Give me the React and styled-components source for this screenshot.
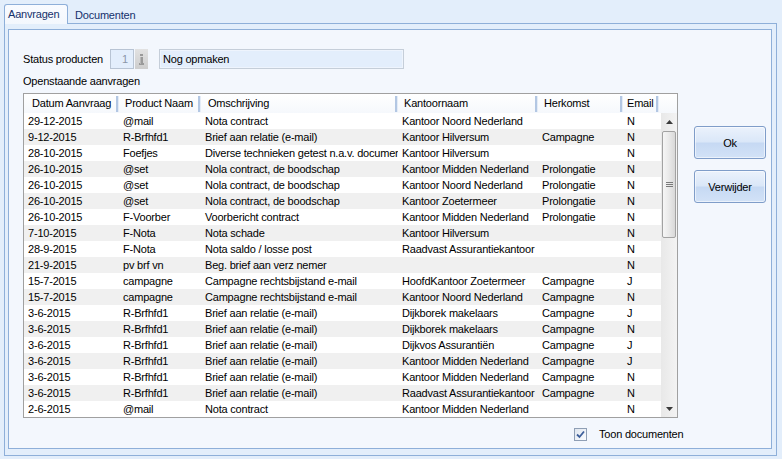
import React from "react";
import styled, { createGlobalStyle } from "styled-components";

const GlobalStyle = createGlobalStyle`
  html, body {
    margin: 0;
    padding: 0;
  }
  body {
    font-family: "Liberation Sans", Arial, sans-serif;
    font-size: 11px;
    letter-spacing: -0.2px;
    color: #000;
    background: #e3eefb;
  }
`;

const COLUMNS = [
  { title: "Datum Aanvraag", width: 95, pad: 8 },
  { title: "Product Naam", width: 82, pad: 6 },
  { title: "Omschrijving", width: 197, pad: 7 },
  { title: "Kantoornaam", width: 140, pad: 6 },
  { title: "Herkomst", width: 85, pad: 6 },
  { title: "Email", width: 36, pad: 4 },
];

const ROWS = [
  ["29-12-2015", "@mail", "Nota contract", "Kantoor Noord Nederland", "", "N"],
  ["9-12-2015", "R-Brfhfd1", "Brief aan relatie (e-mail)", "Kantoor Hilversum", "Campagne", "N"],
  ["28-10-2015", "Foefjes", "Diverse technieken getest n.a.v. documentatie", "Kantoor Hilversum", "", "N"],
  ["26-10-2015", "@set", "Nola contract, de boodschap", "Kantoor Midden Nederland", "Prolongatie", "N"],
  ["26-10-2015", "@set", "Nola contract, de boodschap", "Kantoor Noord Nederland", "Prolongatie", "N"],
  ["26-10-2015", "@set", "Nola contract, de boodschap", "Kantoor Zoetermeer", "Prolongatie", "N"],
  ["26-10-2015", "F-Voorber", "Voorbericht contract", "Kantoor Midden Nederland", "Prolongatie", "N"],
  ["7-10-2015", "F-Nota", "Nota schade", "Kantoor Hilversum", "", "N"],
  ["28-9-2015", "F-Nota", "Nota saldo / losse post", "Raadvast Assurantiekantoor", "", "N"],
  ["21-9-2015", "pv brf vn", "Beg. brief aan verz nemer", "", "", "N"],
  ["15-7-2015", "campagne", "Campagne rechtsbijstand e-mail", "HoofdKantoor Zoetermeer", "Campagne", "J"],
  ["15-7-2015", "campagne", "Campagne rechtsbijstand e-mail", "Kantoor Noord Nederland", "Campagne", "N"],
  ["3-6-2015", "R-Brfhfd1", "Brief aan relatie (e-mail)", "Dijkborek makelaars", "Campagne", "J"],
  ["3-6-2015", "R-Brfhfd1", "Brief aan relatie (e-mail)", "Dijkborek makelaars", "Campagne", "N"],
  ["3-6-2015", "R-Brfhfd1", "Brief aan relatie (e-mail)", "Dijkvos Assurantiën", "Campagne", "J"],
  ["3-6-2015", "R-Brfhfd1", "Brief aan relatie (e-mail)", "Kantoor Midden Nederland", "Campagne", "J"],
  ["3-6-2015", "R-Brfhfd1", "Brief aan relatie (e-mail)", "Kantoor Midden Nederland", "Campagne", "N"],
  ["3-6-2015", "R-Brfhfd1", "Brief aan relatie (e-mail)", "Raadvast Assurantiekantoor", "Campagne", "N"],
  ["2-6-2015", "@mail", "Nota contract", "Kantoor Midden Nederland", "", "N"],
];

const Window = styled.div`
  width: 782px;
  height: 459px;
  box-sizing: border-box;
  padding: 4px 5px 3px 4px;
  display: flex;
  flex-direction: column;
  background: #e3eefb;
`;

const TabStrip = styled.div`
  display: flex;
  align-items: flex-end;
  height: 19px;
`;

const Tab = styled.div`
  box-sizing: border-box;
  width: ${(p) => p.$width}px;
  height: ${(p) => (p.$active ? 20 : 19)}px;
  margin-bottom: ${(p) => (p.$active ? -1 : 0)}px;
  padding: ${(p) => (p.$active ? "1px 0 0 3px" : "3px 0 0 7px")};
  line-height: 16px;
  color: #15306b;
  white-space: nowrap;
  position: relative;
  z-index: 1;
  ${(p) =>
    p.$active &&
    `
    background: linear-gradient(#f9fbff, #f3f7fd);
    border: 1px solid #8eafd9;
    border-bottom: none;
    border-radius: 3px 3px 0 0;
  `}
`;

const TabPage = styled.div`
  flex: 1;
  display: flex;
  box-sizing: border-box;
  border: 1px solid #8eafd9;
  padding: 5px 4px 6px 3px;
`;

const Panel = styled.div`
  flex: 1;
  display: flex;
  flex-direction: column;
  border: 1px solid #8eafd9;
  background: #f3f7fd;
  padding: 19px 5px 0 14px;
`;

const Main = styled.div`
  display: flex;
`;

const LeftColumn = styled.div`
  width: 655px;
  display: flex;
  flex-direction: column;
`;

const ButtonColumn = styled.div`
  margin-left: 16px;
  padding-top: 77px;
  display: flex;
  flex-direction: column;
  gap: 11px;
`;

const Button = styled.button`
  width: 72px;
  height: 33px;
  padding: 0;
  font-family: inherit;
  font-size: 11px;
  letter-spacing: inherit;
  color: #000;
  border: 1px solid #7f9dc9;
  border-radius: 3px;
  background: linear-gradient(#ebf2fc 0%, #dae7f8 48%, #c6d9f3 52%, #d2e2f7 100%);
  box-shadow: inset 0 0 0 1px rgba(255, 255, 255, 0.55);
`;

const StatusRow = styled.div`
  display: flex;
  align-items: center;
  height: 20px;
`;

const StatusLabel = styled.span`
  width: 87px;
`;

const NumberBox = styled.div`
  box-sizing: border-box;
  width: 24px;
  height: 20px;
  line-height: 18px;
  padding-right: 5px;
  text-align: right;
  color: #8b97a8;
  background: #e3eefc;
  border: 1px solid #b8c4d4;
`;

const InfoButton = styled.div`
  box-sizing: border-box;
  width: 13px;
  height: 20px;
  margin-left: 1px;
  display: flex;
  align-items: center;
  justify-content: center;
  background: linear-gradient(#e2e2e2, #cdcdcd);
`;

const TextField = styled.div`
  box-sizing: border-box;
  width: 245px;
  height: 20px;
  margin-left: 11px;
  padding-left: 3px;
  line-height: 18px;
  background: #e3eefc;
  border: 1px solid #c5ced9;
  box-shadow: inset 0 0 0 1px #eef4fd;
`;

const SectionLabel = styled.div`
  margin-top: 5px;
  line-height: 14px;
`;

const Grid = styled.div`
  margin-top: 5px;
  box-sizing: border-box;
  width: 655px;
  height: 325px;
  border: 1px solid #a0a0a0;
  background: #fff;
  display: flex;
  flex-direction: column;
`;

const HeaderRow = styled.div`
  display: flex;
  height: 19px;
  background: linear-gradient(#ffffff, #f5f8fc);
`;

const HeaderCell = styled.div`
  box-sizing: border-box;
  width: ${(p) => p.$width}px;
  padding-left: ${(p) => p.$pad}px;
  line-height: 19px;
  white-space: nowrap;
  overflow: hidden;
  position: relative;

  &::after {
    content: "";
    position: absolute;
    right: 0;
    top: 2px;
    bottom: 1px;
    width: 2px;
    background: #b3c7e3;
    border-right: 1px solid #e4ecf7;
  }
`;

const HeaderFiller = styled.div`
  flex: 1;
`;

const Body = styled.div`
  flex: 1;
  display: flex;
`;

const Rows = styled.div`
  width: 637px;
`;

const Row = styled.div`
  display: flex;
  height: 16px;
  line-height: 16px;
  background: ${(p) => (p.$alt ? "#f0f0f0" : "#fff")};
`;

const Cell = styled.div`
  box-sizing: border-box;
  width: ${(p) => p.$width}px;
  padding-left: 4px;
  white-space: nowrap;
  overflow: hidden;
`;

const Scrollbar = styled.div`
  width: 16px;
  display: flex;
  flex-direction: column;
  background: linear-gradient(90deg, #e8e8e8, #f3f3f3);
`;

const ScrollArrow = styled.div`
  height: 17px;
  display: flex;
  align-items: center;
  justify-content: center;
`;

const Thumb = styled.div`
  margin: 1px 1px 0 1px;
  height: 107px;
  box-sizing: border-box;
  border: 1px solid #a2a2a2;
  border-radius: 2px;
  background: linear-gradient(90deg, #f6f6f6, #e9e9e9 50%, #d8d8d8);
  display: flex;
  align-items: center;
  justify-content: center;
`;

const TrackSpace = styled.div`
  flex: 1;
`;

const Footer = styled.div`
  margin-top: 10px;
  padding-left: 551px;
  height: 13px;
  display: flex;
  align-items: center;
`;

const CheckBox = styled.div`
  box-sizing: border-box;
  width: 13px;
  height: 13px;
  border: 1px solid #8f9fb5;
  background: linear-gradient(135deg, #dfe6ef, #fafcff);
  display: flex;
  align-items: center;
  justify-content: center;
`;

const CheckLabel = styled.span`
  margin-left: 12px;
  line-height: 13px;
`;

function Arrow({ down }) {
  return (
    <svg width="7" height="4" viewBox="0 0 7 4">
      <polygon
        points={down ? "0,0 7,0 3.5,4" : "0,4 7,4 3.5,0"}
        fill="#3a3a3a"
      />
    </svg>
  );
}

export default function App() {
  return (
    <>
      <GlobalStyle />
      <Window>
        <TabStrip>
          <Tab $active $width={64}>Aanvragen</Tab>
          <Tab $width={72}>Documenten</Tab>
        </TabStrip>
        <TabPage>
          <Panel>
            <Main>
              <LeftColumn>
                <StatusRow>
                  <StatusLabel>Status producten</StatusLabel>
                  <NumberBox>1</NumberBox>
                  <InfoButton>
                    <svg width="5" height="11" viewBox="0 0 5 11">
                      <rect x="1" y="0" width="3" height="2" fill="#9a9a9a" />
                      <rect x="1" y="3" width="3" height="7" fill="#9a9a9a" />
                      <rect x="0" y="9" width="5" height="2" fill="#9a9a9a" />
                      <rect x="1" y="3" width="1" height="7" fill="#b8b8b8" />
                    </svg>
                  </InfoButton>
                  <TextField>Nog opmaken</TextField>
                </StatusRow>
                <SectionLabel>Openstaande aanvragen</SectionLabel>
                <Grid>
                  <HeaderRow>
                    {COLUMNS.map((c) => (
                      <HeaderCell key={c.title} $width={c.width} $pad={c.pad}>
                        {c.title}
                      </HeaderCell>
                    ))}
                    <HeaderFiller />
                  </HeaderRow>
                  <Body>
                    <Rows>
                      {ROWS.map((r, i) => (
                        <Row key={i} $alt={i % 2 === 1}>
                          {r.map((v, j) => (
                            <Cell key={j} $width={COLUMNS[j].width}>
                              {v}
                            </Cell>
                          ))}
                        </Row>
                      ))}
                    </Rows>
                    <Scrollbar>
                      <ScrollArrow>
                        <Arrow />
                      </ScrollArrow>
                      <Thumb>
                        <svg width="7" height="5" viewBox="0 0 7 5">
                          <rect y="0" width="7" height="1" fill="#7a7a7a" />
                          <rect y="2" width="7" height="1" fill="#7a7a7a" />
                          <rect y="4" width="7" height="1" fill="#7a7a7a" />
                        </svg>
                      </Thumb>
                      <TrackSpace />
                      <ScrollArrow>
                        <Arrow down />
                      </ScrollArrow>
                    </Scrollbar>
                  </Body>
                </Grid>
              </LeftColumn>
              <ButtonColumn>
                <Button>Ok</Button>
                <Button>Verwijder</Button>
              </ButtonColumn>
            </Main>
            <Footer>
              <CheckBox>
                <svg width="9" height="9" viewBox="0 0 9 9">
                  <path
                    d="M1 4.5 L3.5 7 L8 1.5"
                    fill="none"
                    stroke="#3d5f9b"
                    strokeWidth="1.8"
                  />
                </svg>
              </CheckBox>
              <CheckLabel>Toon documenten</CheckLabel>
            </Footer>
          </Panel>
        </TabPage>
      </Window>
    </>
  );
}
